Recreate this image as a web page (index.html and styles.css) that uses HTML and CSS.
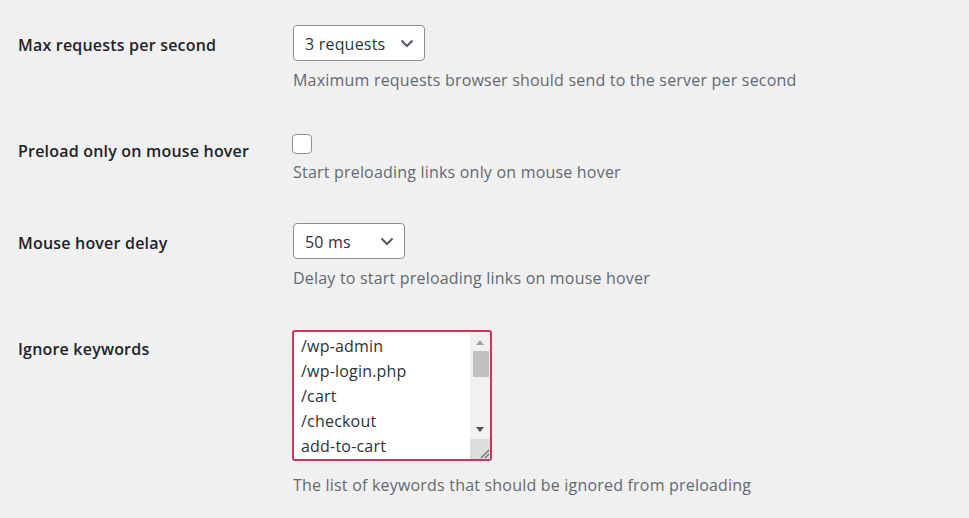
FILE: index.html
```html
<!DOCTYPE html>
<html lang="en">
<head>
<meta charset="utf-8">
<title>Preload settings</title>
<link rel="stylesheet" href="styles.css">
</head>
<body>
<div class="form">
  <div class="row">
    <div class="label">Max requests per second</div>
    <div class="field">
      <div class="select select-wide"><span>3 requests</span>
        <svg class="chev" width="14" height="9" viewBox="0 0 14 9"><path d="M1.5 1.5 L7 7 L12.5 1.5" fill="none" stroke="#50575e" stroke-width="2"/></svg>
      </div>
      <p class="desc">Maximum requests browser should send to the server per second</p>
    </div>
  </div>
  <div class="row">
    <div class="label">Preload only on mouse hover</div>
    <div class="field">
      <div class="checkbox"></div>
      <p class="desc desc-check">Start preloading links only on mouse hover</p>
    </div>
  </div>
  <div class="row">
    <div class="label">Mouse hover delay</div>
    <div class="field">
      <div class="select select-narrow"><span>50 ms</span>
        <svg class="chev" width="14" height="9" viewBox="0 0 14 9"><path d="M1.5 1.5 L7 7 L12.5 1.5" fill="none" stroke="#50575e" stroke-width="2"/></svg>
      </div>
      <p class="desc">Delay to start preloading links on mouse hover</p>
    </div>
  </div>
  <div class="row">
    <div class="label">Ignore keywords</div>
    <div class="field">
      <div class="textarea">
        <div class="lines">
          <div>/wp-admin</div>
          <div>/wp-login.php</div>
          <div>/cart</div>
          <div>/checkout</div>
          <div>add-to-cart</div>
        </div>
        <div class="scrollbar">
          <div class="sb-btn"><svg width="10" height="6" viewBox="0 0 10 6"><path d="M1 6 L5 1 L9 6 Z" fill="#a3a3a3"/></svg></div>
          <div class="sb-thumb"></div>
          <div class="sb-track"></div>
          <div class="sb-btn"><svg width="10" height="6" viewBox="0 0 10 6"><path d="M1 0 L9 0 L5 5 Z" fill="#505050"/></svg></div>
          <div class="sb-corner"><svg width="12" height="12" viewBox="0 0 12 12"><path d="M11 3 L3 11 M11 7 L7 11" stroke="#6a6a6a" stroke-width="1.2"/></svg></div>
        </div>
      </div>
      <p class="desc desc-area">The list of keywords that should be ignored from preloading</p>
    </div>
  </div>
</div>
</body>
</html>
```
FILE: styles.css
```css
html, body {
  margin: 0;
  padding: 0;
  background: #f0f0f1;
}
body {
  font-family: "Open Sans", "Noto Sans", sans-serif;
  font-size: 16px;
  letter-spacing: 0.2px;
  color: #1d2327;
}
.form {
  padding: 25px 0 0 18px;
  display: flex;
  flex-direction: column;
  gap: 40px;
}
.row {
  display: grid;
  grid-template-columns: 275px auto;
}
.label {
  font-weight: 600;
  line-height: 21px;
  padding-top: 10px;
  color: #1d2327;
}
.field {
  display: flex;
  flex-direction: column;
  align-items: flex-start;
}
.select {
  box-sizing: border-box;
  height: 36px;
  border: 1px solid #8c8f94;
  border-radius: 4px;
  background: #fff;
  display: flex;
  align-items: center;
  justify-content: space-between;
  padding: 2px 10px 0 11px;
  color: #2c3338;
  line-height: 21px;
}
.select-wide { width: 132px; }
.select-narrow { width: 112px; }
.chev { display: block; margin-top: -2px; }
.desc {
  margin: 9px 0 0 0;
  line-height: 21px;
  color: #646970;
}
.desc-check { margin-top: 8px; }
.desc-area { margin-top: 14px; }
.checkbox {
  box-sizing: border-box;
  width: 20px;
  height: 20px;
  margin: 3px 0 0 -1px;
  border: 1px solid #8c8f94;
  border-radius: 4px;
  background: #fff;
}
.textarea {
  box-sizing: border-box;
  width: 200px;
  height: 131px;
  margin: 1px 0 0 -1px;
  border: 2px solid #d1335f;
  border-radius: 3px;
  background: #fff;
  display: flex;
  overflow: hidden;
}
.lines {
  flex: 1;
  padding: 2px 0 0 7px;
  line-height: 25px;
  color: #2c3338;
  overflow: hidden;
}
.scrollbar {
  width: 20px;
  background: #f1f1f1;
  display: flex;
  flex-direction: column;
}
.sb-btn {
  height: 19px;
  display: flex;
  align-items: center;
  justify-content: center;
}
.sb-thumb {
  height: 26px;
  margin: 0 1px 0 3px;
  background: #c1c1c1;
}
.sb-track { flex: 1; }
.sb-corner {
  height: 20px;
  background: #dcdcdc;
  display: flex;
  align-items: flex-end;
  justify-content: flex-end;
}
```
